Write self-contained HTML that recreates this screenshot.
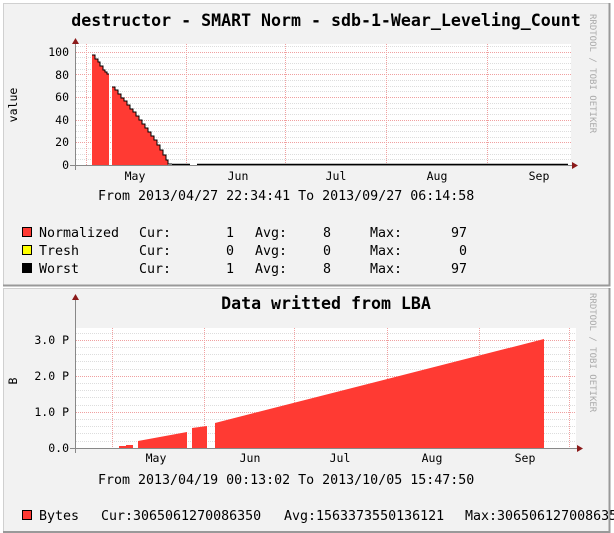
<!DOCTYPE html>
<html><head><meta charset="utf-8"><style>
html,body{margin:0;padding:0;background:#fff;}
svg{display:block;font-family:"DejaVu Sans Mono","Liberation Mono",monospace;}
</style></head><body>
<svg width="614" height="533" viewBox="0 0 614 533" xmlns="http://www.w3.org/2000/svg">
<!-- panel 1 -->
<rect x="3" y="3" width="607" height="283" fill="#f2f2f2"/>
<path d="M3.5 286V3.5H609" stroke="#d0d0d0" stroke-width="1" fill="none"/>
<path d="M3 285.5H609.5V3" stroke="#999" stroke-width="2" fill="none"/>
<!-- panel 2 -->
<rect x="3" y="288" width="607" height="245" fill="#f2f2f2"/>
<path d="M3.5 533V288.5H609" stroke="#d0d0d0" stroke-width="1" fill="none"/>
<path d="M3 532H609.5V288" stroke="#999" stroke-width="2" fill="none"/>

<!-- ===== top chart ===== -->
<text x="326" y="26" font-size="16.6" font-weight="bold" text-anchor="middle" fill="#000">destructor - SMART Norm - sdb-1-Wear_Leveling_Count</text>
<text transform="translate(590,14) rotate(90)" font-size="9" fill="#aaa">RRDTOOL / TOBI OETIKER</text>
<rect x="76" y="44" width="495" height="121" fill="#fff"/>
<g stroke="#ddd" stroke-dasharray="1,1" stroke-width="1">
<path d="M76 46.5H571M76 57.5H571M76 63.5H571M76 69.5H571M76 80.5H571M76 86.5H571M76 91.5H571M76 103.5H571M76 108.5H571M76 114.5H571M76 125.5H571M76 131.5H571M76 137.5H571M76 148.5H571M76 154.5H571M76 159.5H571"/>
</g>
<g stroke="#f0a0a0" stroke-dasharray="1,1" stroke-width="1">
<path d="M76 52.5H571M76 74.5H571M76 97.5H571M76 120.5H571M76 142.5H571"/>
<path d="M86.5 44V165M186.5 44V165M285.5 44V165M386.5 44V165M487.5 44V165"/>
</g>
<path d="M92 165V55H95V59H98V62H100V66H103V70H105V72H107V74H109V165Z" fill="#ff3a33"/>
<path d="M92 55H95V59H98V62H100V66H103V70H105V72H107V74H109" fill="none" stroke="#000" stroke-width="1"/>
<path d="M112 165V87H115V90H118V94H121V98H124V101H127V105H130V109H133V112H136V116H139V120H142V124H145V128H148V132H151V136H154V140H157V145H160V150H163V155H166V160H168V165Z" fill="#ff3a33"/>
<path d="M112 87H115V90H118V94H121V98H124V101H127V105H130V109H133V112H136V116H139V120H142V124H145V128H148V132H151V136H154V140H157V145H160V150H163V155H166V160H168V164H172" fill="none" stroke="#000" stroke-width="1"/>
<path d="M172 164.5H190M197 164.5H568" stroke="#000" stroke-width="1.5"/>
<path d="M75.5 44V170M70 165.5H573" stroke="#888" stroke-width="1"/>
<path d="M75.5 38L72 44H79Z" fill="#8b1a1a"/>
<path d="M578 165.5L572 162V169Z" fill="#8b1a1a"/>
<g font-size="11.5" fill="#000" text-anchor="end">
<text x="69" y="56">100</text><text x="69" y="79">80</text><text x="69" y="101">60</text><text x="69" y="124">40</text><text x="69" y="146">20</text><text x="69" y="169">0</text>
</g>
<g font-size="11.5" fill="#000" text-anchor="middle">
<text x="135" y="180">May</text><text x="238" y="180">Jun</text><text x="336" y="180">Jul</text><text x="437" y="180">Aug</text><text x="539" y="180">Sep</text>
</g>
<text transform="translate(17,105) rotate(-90)" font-size="11.5" text-anchor="middle">value</text>
<text x="98" y="200" font-size="13.3">From 2013/04/27 22:34:41 To 2013/09/27 06:14:58</text>
<g font-size="13.3" fill="#000">
<rect x="22.5" y="227.5" width="9" height="9" fill="#ff3a33" stroke="#000"/>
<rect x="22.5" y="245.5" width="9" height="9" fill="#ffff00" stroke="#000"/>
<rect x="22.5" y="263.5" width="9" height="9" fill="#000" stroke="#000"/>
<text x="39" y="237">Normalized</text><text x="139" y="237">Cur:</text><text x="234" y="237" text-anchor="end">1</text><text x="255" y="237">Avg:</text><text x="331" y="237" text-anchor="end">8</text><text x="370" y="237">Max:</text><text x="467" y="237" text-anchor="end">97</text>
<text x="39" y="255">Tresh</text><text x="139" y="255">Cur:</text><text x="234" y="255" text-anchor="end">0</text><text x="255" y="255">Avg:</text><text x="331" y="255" text-anchor="end">0</text><text x="370" y="255">Max:</text><text x="467" y="255" text-anchor="end">0</text>
<text x="39" y="273">Worst</text><text x="139" y="273">Cur:</text><text x="234" y="273" text-anchor="end">1</text><text x="255" y="273">Avg:</text><text x="331" y="273" text-anchor="end">8</text><text x="370" y="273">Max:</text><text x="467" y="273" text-anchor="end">97</text>
</g>

<!-- ===== bottom chart ===== -->
<text x="326" y="309" font-size="16.6" font-weight="bold" text-anchor="middle" fill="#000">Data writted from LBA</text>
<text transform="translate(590,293) rotate(90)" font-size="9" fill="#aaa">RRDTOOL / TOBI OETIKER</text>
<rect x="76" y="328" width="500" height="120" fill="#fff"/>
<g stroke="#ddd" stroke-dasharray="1,1" stroke-width="1">
<path d="M76 333.5H576M76 347.5H576M76 354.5H576M76 361.5H576M76 369.5H576M76 383.5H576M76 390.5H576M76 397.5H576M76 405.5H576M76 419.5H576M76 426.5H576M76 433.5H576M76 441.5H576"/>
</g>
<g stroke="#f0a0a0" stroke-dasharray="1,1" stroke-width="1">
<path d="M76 340.5H576M76 376.5H576M76 412.5H576"/>
<path d="M112.5 328V448M204.5 328V448M294.5 328V448M387.5 328V448M479.5 328V448M569.5 328V448"/>
</g>
<path d="M119 448V446H126V445H133V448Z" fill="#ff3a33"/>
<path d="M138 448V441L187 432V448Z" fill="#ff3a33"/>
<path d="M192 448V428L207 426V448Z" fill="#ff3a33"/>
<path d="M215 448V423L544 339V448Z" fill="#ff3a33"/>
<path d="M75.5 300V453M70 448.5H578" stroke="#888" stroke-width="1"/>
<path d="M75.5 294L72 300H79Z" fill="#8b1a1a"/>
<path d="M583 448.5L577 445V452Z" fill="#8b1a1a"/>
<g font-size="11.5" fill="#000" text-anchor="end">
<text x="69" y="344">3.0 P</text><text x="69" y="380">2.0 P</text><text x="69" y="416">1.0 P</text><text x="69" y="452">0.0</text>
</g>
<g font-size="11.5" fill="#000" text-anchor="middle">
<text x="156" y="462">May</text><text x="250" y="462">Jun</text><text x="340" y="462">Jul</text><text x="432" y="462">Aug</text><text x="525" y="462">Sep</text>
</g>
<text transform="translate(17,381) rotate(-90)" font-size="11.5" text-anchor="middle">B</text>
<text x="98" y="484" font-size="13.3">From 2013/04/19 00:13:02 To 2013/10/05 15:47:50</text>
<rect x="22.5" y="510.5" width="9" height="9" fill="#ff3a33" stroke="#000"/>
<g font-size="13.3" fill="#000">
<text x="39" y="520">Bytes</text><text x="101" y="520">Cur:3065061270086350</text><text x="284" y="520">Avg:1563373550136121</text><text x="465" y="520">Max:3065061270086350</text>
</g>
</svg>
</body></html>
